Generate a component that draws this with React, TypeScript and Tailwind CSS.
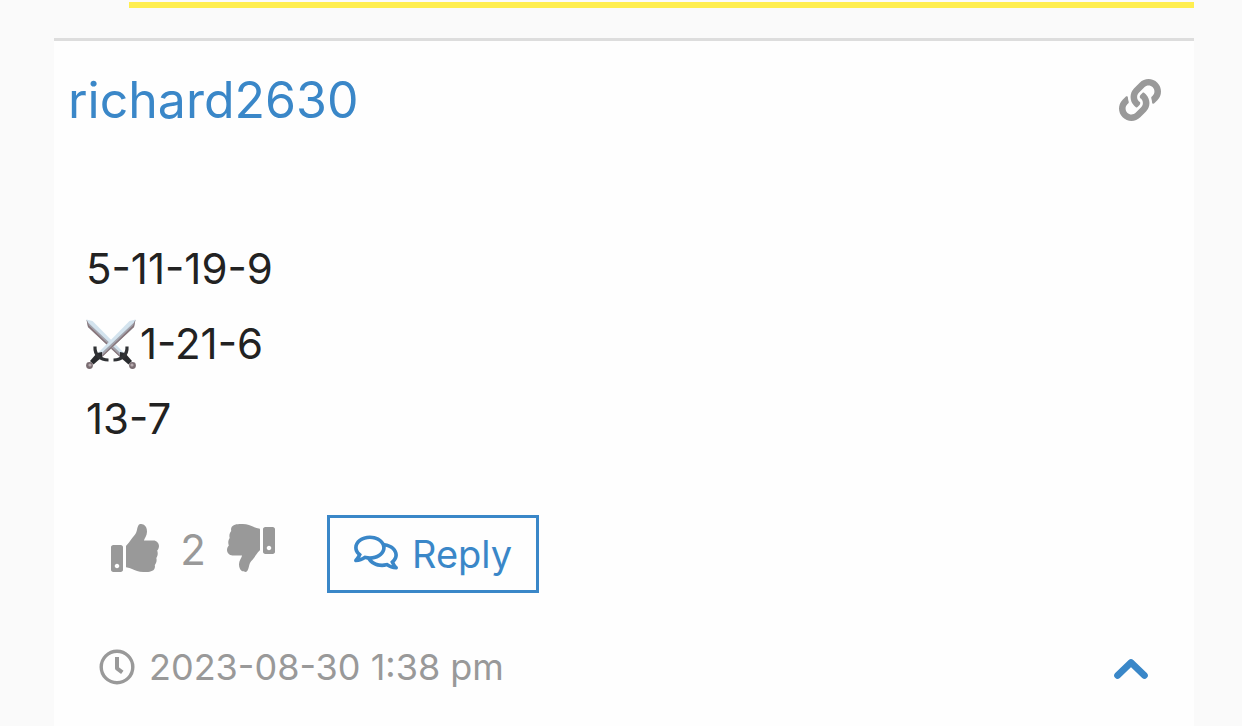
import { useState } from "react";
import { FaLink, FaRegComments, FaThumbsDown, FaThumbsUp } from "react-icons/fa";

function Sword() {
  return (
    <>
      <path d="M0.5 0.5 L6.5 2 L38 34 L34 38 L2 8 Z" fill="#d3e3ee" />
      <path d="M0.5 0.5 L2 3.5 L36.5 36 L34 38 L2 8 Z" fill="#a2a3ac" />
      <path d="M0.5 0.5 L2 8 L34 38 L34.5 37 L3 6.5 Z" fill="#88757a" />
      <path d="M34 33 L39 34 L46 42 L42.5 45.5 L34 38 Z" fill="#292b2e" />
      <path d="M41 27.5 C41.5 36 36 41 27.5 41" fill="none" stroke="#303235" strokeWidth="3.2" />
      <circle cx="46.5" cy="46.5" r="3.4" fill="#796c71" />
      <circle cx="46" cy="46" r="1.6" fill="#b6a9ad" />
    </>
  );
}

function Swords() {
  return (
    <svg className="mr-1 h-[50px] w-[50px] shrink-0" viewBox="0 0 50 50" role="img" aria-label="Crossed swords">
      <Sword />
      <g transform="translate(50 0) scale(-1 1)">
        <Sword />
      </g>
    </svg>
  );
}

export default function App() {
  const [votes, setVotes] = useState(2);

  return (
    <main className="flex min-h-screen flex-col bg-[#fafafa] pl-[54px] pr-12 pt-0.5 font-['Inter',sans-serif]">
      <div className="ml-[75px] h-1.5 bg-[#ffee4f]" />

      <article className="mt-[30px] flex-1 border-t-[3px] border-[#dddddd] bg-[#fefefe]">
        <header className="flex items-center justify-between pl-[14px] pr-[33px] pt-[22px]">
          <a href="#profile" className="text-[50px] leading-[74px] text-[#3a87c8]">
            richard2630
          </a>
          <a href="#comment" aria-label="Link to comment" className="text-[#999999]">
            <FaLink className="h-[42px] w-[42px]" />
          </a>
        </header>

        <div className="mt-[94px] px-8 text-[42px] leading-[75px] text-[#222222]">
          <p>5-11-19-9</p>
          <p className="flex items-center">
            <Swords />
            1-21-6
          </p>
          <p>13-7</p>
        </div>

        <div className="mt-[59px] flex items-center pl-[57px]">
          <button aria-label="Like" onClick={() => setVotes(votes + 1)} className="-mt-3 text-[#999999]">
            <FaThumbsUp className="h-12 w-12" />
          </button>
          <span className="-mt-2 w-[68px] text-center text-[42px] leading-[60px] text-[#999999]">{votes}</span>
          <button aria-label="Dislike" onClick={() => setVotes(votes - 1)} className="-mt-3 text-[#999999]">
            <FaThumbsDown className="h-12 w-12 -scale-x-100" />
          </button>
          <button className="ml-[52px] flex h-[78px] items-center gap-[14px] border-[3px] border-[#3a87c8] px-6 text-[38px] text-[#3a87c8]">
            <FaRegComments className="mb-1 h-[39px] w-[44px]" />
            Reply
          </button>
        </div>

        <footer className="mt-11 flex items-center justify-between pl-[45px] pr-[45px]">
          <div className="flex items-center gap-[14px] text-[36px] leading-[60px] text-[#999999]">
            <svg className="h-9 w-9" viewBox="0 0 36 36" fill="none" stroke="currentColor" aria-hidden>
              <circle cx="18" cy="18" r="15.8" strokeWidth="3.4" />
              <path d="M18 8 V19.3 L23.3 23.3" strokeWidth="4" strokeLinejoin="round" />
            </svg>
            <time dateTime="2023-08-30T13:38">2023-08-30 1:38 pm</time>
          </div>
          <button aria-label="Collapse" className="pt-1 text-[#3a87c8]">
            <svg className="h-6 w-9" viewBox="0 0 36 24" fill="none" stroke="currentColor" strokeWidth="6.6">
              <path d="M4.5 18.500 L18 5.5 L31.5 18.500" strokeLinecap="round" strokeLinejoin="round" />
            </svg>
          </button>
        </footer>
      </article>
    </main>
  );
}
